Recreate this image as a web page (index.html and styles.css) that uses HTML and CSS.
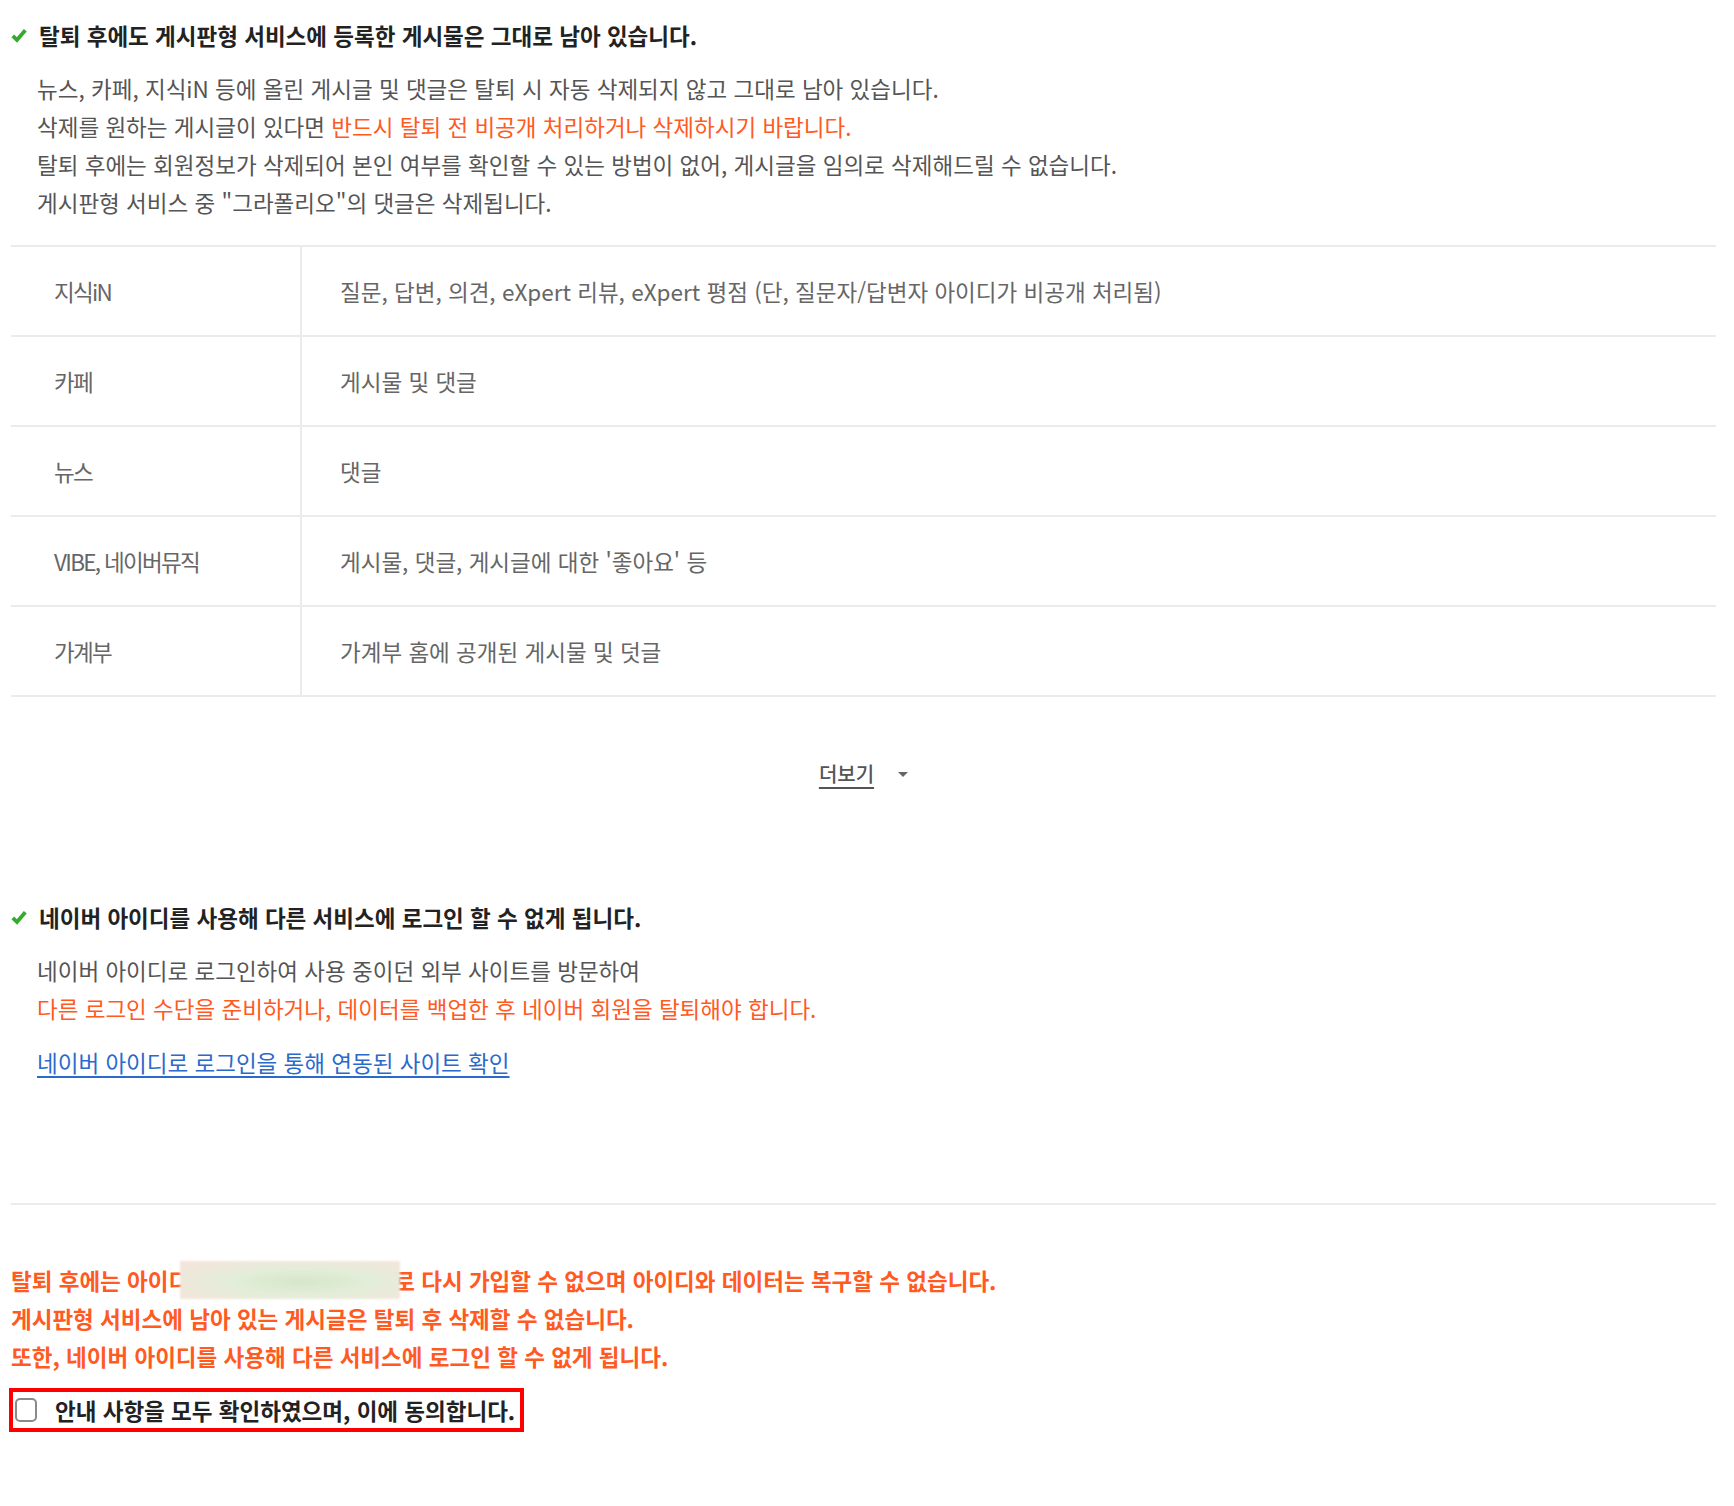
FILE: index.html
```html
<!DOCTYPE html>
<html lang="ko">
<head>
<meta charset="utf-8">
<title>회원탈퇴 안내</title>
<link rel="stylesheet" href="styles.css">
</head>
<body>
<div class="page">
  <section class="notice">
    <h3 class="notice-title">
      <svg class="check" width="16" height="15" viewBox="0 0 16 15"><path d="M1.8 7.8 L6 12 L14.3 2.2" fill="none" stroke="#33ab2e" stroke-width="3.8" stroke-linecap="butt" stroke-linejoin="miter"/></svg>
      <span>탈퇴 후에도 게시판형 서비스에 등록한 게시물은 그대로 남아 있습니다.</span>
    </h3>
    <div class="notice-body">
      <p>뉴스, 카페, 지식iN 등에 올린 게시글 및 댓글은 탈퇴 시 자동 삭제되지 않고 그대로 남아 있습니다.</p>
      <p>삭제를 원하는 게시글이 있다면 <em class="hl">반드시 탈퇴 전 비공개 처리하거나 삭제하시기 바랍니다.</em></p>
      <p>탈퇴 후에는 회원정보가 삭제되어 본인 여부를 확인할 수 있는 방법이 없어, 게시글을 임의로 삭제해드릴 수 없습니다.</p>
      <p>게시판형 서비스 중 "그라폴리오"의 댓글은 삭제됩니다.</p>
    </div>
    <div class="svc-table">
      <div class="svc-row"><div class="svc-name">지식iN</div><div class="svc-desc">질문, 답변, 의견, eXpert 리뷰, eXpert 평점 (단, 질문자/답변자 아이디가 비공개 처리됨)</div></div>
      <div class="svc-row"><div class="svc-name">카페</div><div class="svc-desc">게시물 및 댓글</div></div>
      <div class="svc-row"><div class="svc-name">뉴스</div><div class="svc-desc">댓글</div></div>
      <div class="svc-row"><div class="svc-name">VIBE, 네이버뮤직</div><div class="svc-desc">게시물, 댓글, 게시글에 대한 '좋아요' 등</div></div>
      <div class="svc-row"><div class="svc-name">가계부</div><div class="svc-desc">가계부 홈에 공개된 게시물 및 덧글</div></div>
    </div>
    <div class="more"><a class="more-link" href="#">더보기</a><span class="caret"></span></div>
  </section>

  <section class="notice notice-second">
    <h3 class="notice-title">
      <svg class="check" width="16" height="15" viewBox="0 0 16 15"><path d="M1.8 7.8 L6 12 L14.3 2.2" fill="none" stroke="#33ab2e" stroke-width="3.8" stroke-linecap="butt" stroke-linejoin="miter"/></svg>
      <span>네이버 아이디를 사용해 다른 서비스에 로그인 할 수 없게 됩니다.</span>
    </h3>
    <div class="notice-body">
      <p>네이버 아이디로 로그인하여 사용 중이던 외부 사이트를 방문하여</p>
      <p class="hl">다른 로그인 수단을 준비하거나, 데이터를 백업한 후 네이버 회원을 탈퇴해야 합니다.</p>
    </div>
    <a class="site-link" href="#">네이버 아이디로 로그인을 통해 연동된 사이트 확인</a>
  </section>

  <hr class="divider">

  <div class="warning">
    <p>탈퇴 후에는 아이디<span class="masked" aria-label="아이디"></span>로 다시 가입할 수 없으며 아이디와 데이터는 복구할 수 없습니다.</p>
    <p>게시판형 서비스에 남아 있는 게시글은 탈퇴 후 삭제할 수 없습니다.</p>
    <p>또한, 네이버 아이디를 사용해 다른 서비스에 로그인 할 수 없게 됩니다.</p>
  </div>

  <label class="agree"><span class="checkbox"></span><span class="agree-text">안내 사항을 모두 확인하였으며, 이에 동의합니다.</span></label>
</div>
</body>
</html>
```

FILE: styles.css
```css
html, body {
  margin: 0;
  padding: 0;
  background: #fff;
}

.page {
  padding: 20px 18px 70px 11px;
  font-family: "Noto Sans CJK KR", "Noto Sans", sans-serif;
  font-size: 22.5px;
  color: #555;
}

.notice-title {
  margin: 0;
  display: flex;
  align-items: center;
  gap: 12px;
  font-size: 22.5px;
  line-height: 30px;
  font-weight: 700;
  color: #222;
}

.check {
  flex: none;
}

.notice-body {
  margin-top: 19px;
  padding-left: 26px;
  line-height: 38px;
  color: #555;
}

.notice-body p {
  margin: 0;
}

.hl {
  font-style: normal;
  color: #ff5a1f;
}

.svc-table {
  margin-top: 24px;
  border-top: 2px solid #ebebeb;
}

.svc-row {
  display: grid;
  grid-template-columns: 291px 1fr;
  height: 88px;
  border-bottom: 2px solid #ebebeb;
  color: #666;
}

.svc-name {
  display: flex;
  align-items: center;
  padding-left: 43px;
  border-right: 2px solid #ebebeb;
  letter-spacing: -1.7px;
}

.svc-desc {
  display: flex;
  align-items: center;
  padding-left: 38px;
}

.more {
  margin-top: 62px;
  display: flex;
  justify-content: center;
  align-items: center;
  gap: 24px;
  line-height: 30px;
}

.more-link {
  font-size: 20px;
  font-weight: 500;
  color: #555;
  text-decoration: underline;
  text-decoration-thickness: 2px;
  text-underline-offset: 5px;
}

.caret {
  width: 0;
  height: 0;
  border-left: 5px solid transparent;
  border-right: 5px solid transparent;
  border-top: 5px solid #666;
}

.notice-second {
  margin-top: 113px;
}

.site-link {
  display: inline-block;
  margin-top: 16px;
  margin-left: 26px;
  line-height: 38px;
  color: #2a6acc;
  text-decoration: underline;
  text-underline-offset: 4px;
}

.divider {
  margin: 122px 0 0 0;
  border: 0;
  border-top: 2px solid #ebebeb;
  height: 0;
}

.warning {
  margin-top: 56px;
  font-weight: 700;
  line-height: 38px;
  color: #ff5a1f;
}

.warning p {
  margin: 0;
}

.masked {
  position: relative;
  z-index: 1;
  display: inline-block;
  vertical-align: top;
  width: 220px;
  height: 38px;
  margin: 0 -6px 0 -9px;
  background: radial-gradient(ellipse at 55% 55%, #d6e6ca 0%, #e2eed8 40%, #f3e6dc 85%, #f6e1d6 100%);
  filter: blur(1px);
}

.agree {
  margin-top: 13px;
  margin-left: -2px;
  display: inline-flex;
  align-items: center;
  height: 36px;
  padding: 0 5px 0 2px;
  border: 4px solid #ff0000;
}

.checkbox {
  flex: none;
  width: 18px;
  height: 20px;
  border: 2px solid #8a8a8a;
  border-radius: 5px;
  margin-right: 18px;
}

.agree-text {
  font-weight: 700;
  color: #222;
  line-height: 30px;
}
```
